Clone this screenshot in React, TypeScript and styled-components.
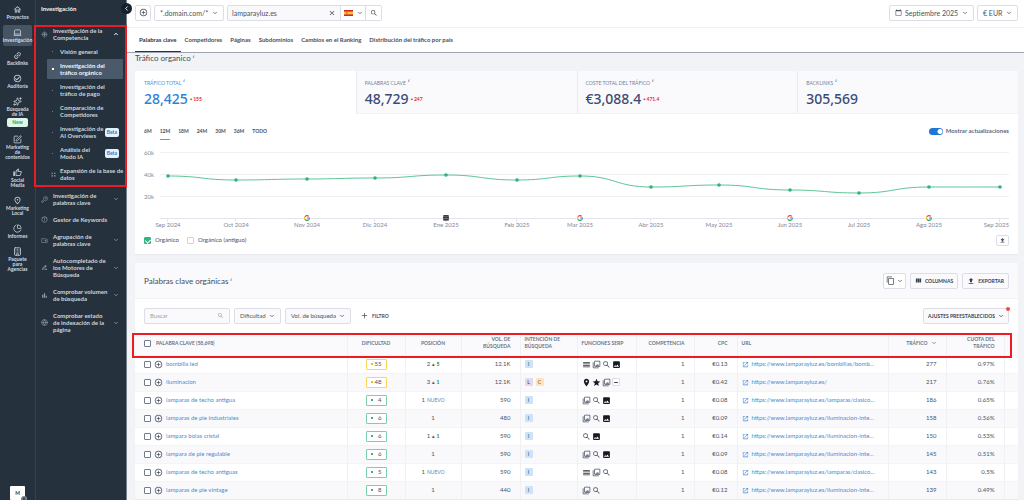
import React from 'react';
import styled, { createGlobalStyle, css } from 'styled-components';
import {
  MdAddCircleOutline, MdCalendarToday, MdCheckCircleOutline, MdContentCopy, MdImage, MdLink, MdOpenInNew,
  MdOutlineHome, MdOutlinePhotoLibrary, MdPlace, MdReorder, MdSearch, MdStar, MdUpload, MdViewColumn,
  MdOutlineThumbUp, MdOutlinePlace, MdOutlineCreateNewFolder, MdErrorOutline, MdBarChart,
  MdOutlineGpsFixed, MdAdd, MdClose, MdDriveFileRenameOutline, MdZoomOutMap,
} from 'react-icons/md';
import { Building, ChartPie, ChevronDown, ChevronLeft, ChevronUp, Globe, KeyRound, Laptop, Sparkles, SquarePen } from 'lucide-react';

const GlobalStyle = createGlobalStyle`
  * { box-sizing: border-box; }
  body {
    margin: 0;
    background: #f2f3f7;
    color: #4a5261;
    font: 6px/8px Lato, "Noto Sans", sans-serif;
  }
  button, input, select { font: inherit; color: inherit; margin: 0; }
  a { color: inherit; text-decoration: none; }
  svg { flex: none; }
`;

const Shell = styled.div`
  display: flex;
  height: 100vh;
  overflow: hidden;
`;

/* ---------- icon rail ---------- */

const Rail = styled.nav`
  display: flex;
  flex-direction: column;
  align-items: center;
  gap: 8px;
  flex: none;
  width: 35px;
  padding-top: 5px;
  background: #25323e;
  color: #d3dae1;
  font-size: 5px;
  line-height: 5px;
  font-weight: 700;
  text-align: center;
`;

const RailLink = styled.a<{ $active?: boolean }>`
  display: flex;
  flex-direction: column;
  align-items: center;
  gap: 1px;
  width: 29px;
  ${p => p.$active && css`
    padding: 3px 0;
    margin: -3px 0;
    border-radius: 2px;
    background: #465564;
  `}
`;

const NewBadge = styled.span`
  width: 21px;
  border-radius: 2px;
  background: #dff7ea;
  color: #2a9d6a;
  line-height: 9px;
`;

const Avatar = styled.div`
  position: relative;
  width: 15px;
  height: 14px;
  margin-top: auto;
  border-radius: 1px;
  background: #fff;
  color: #2b3947;
  line-height: 14px;
  svg { position: absolute; right: -2px; bottom: -2px; background: #9aa4ae; border-radius: 50%; }
`;

/* ---------- section menu ---------- */

const Menu = styled.aside`
  position: relative;
  flex: none;
  width: 92px;
  padding: 5px 3px 0 5px;
  border-left: 1px solid #34424f;
  border-right: 1px solid #76818c;
  background: #25323e;
  color: #cdd4db;
  line-height: 7px;
  font-weight: 700;
`;

const MenuTitle = styled.h2`
  margin: 0 0 14px;
  color: #f2f5f8;
  font-size: 6px;
  line-height: 8px;
`;

const Collapse = styled.button`
  position: absolute;
  top: 3px;
  right: -6px;
  z-index: 2;
  display: grid;
  place-items: center;
  width: 11px;
  height: 11px;
  padding: 0;
  border: 0;
  border-radius: 50%;
  background: #18222c;
  color: #fff;
`;

const Group = styled.a`
  display: flex;
  align-items: center;
  margin-bottom: 10px;
  > span { flex: 1; padding-left: 5px; white-space: pre; }
  > svg { color: #93a0ac; }
  > svg:last-child { margin-right: 4px; }
`;

const SubList = styled.ul`
  display: flex;
  flex-direction: column;
  gap: 1px;
  margin: -6px 0 8px 6px;
  padding: 0;
  list-style: none;
`;

const SubLink = styled.a<{ $active?: boolean }>`
  display: flex;
  align-items: center;
  padding: 3px 4px;
  border-radius: 1px;
  background: ${p => (p.$active ? '#4b5a6a' : 'transparent')};
  color: ${p => (p.$active ? '#f2f5f8' : 'inherit')};
  &::before {
    content: '';
    width: ${p => (p.$active ? '2px' : '1px')};
    height: ${p => (p.$active ? '2px' : '1px')};
    margin-left: 1px;
    margin-right: ${p => (p.$active ? '6px' : '7px')};
    background: ${p => (p.$active ? '#fff' : '#6d7a86')};
  }
  span { flex: 1; white-space: pre-line; }
`;

const ExpandLink = styled(SubLink)`
  gap: 4px;
  padding-right: 0;
  &::before { display: none; }
  span { white-space: pre; }
`;

const Beta = styled.em`
  padding: 0 2px;
  border-radius: 2px;
  background: #e4f0fb;
  color: #2e7bc4;
  font-size: 5px;
  line-height: 9px;
  font-style: normal;
`;

/* ---------- main area ---------- */

const Main = styled.main`
  flex: 1;
  min-width: 0;
`;

const TopBar = styled.header`
  display: flex;
  align-items: center;
  gap: 3px;
  height: 28px;
  padding: 0 6px 2px 8px;
  background: #fff;
  border-bottom: 1px solid #f1f2f5;
  font-size: 7px;
`;

const Spacer = styled.span`
  flex: 1;
`;

const box = css`
  border: 1px solid #dcdde6;
  border-radius: 2px;
  background: #fff;
`;

const IconButton = styled.button<{ $w?: number }>`
  ${box}
  display: flex;
  align-items: center;
  justify-content: center;
  gap: 2px;
  width: ${p => p.$w ?? 16}px;
  height: 16px;
  padding: 0;
`;

const SelectBox = styled.label<{ $tint?: boolean }>`
  ${box}
  display: inline-flex;
  align-items: center;
  gap: 3px;
  height: 16px;
  padding: 0 5px;
  ${p => p.$tint && css`background: #fafafc;`}
  select {
    appearance: none;
    border: 0;
    padding: 0;
    background: transparent;
    outline: 0;
  }
`;

const SearchGroup = styled.form`
  ${box}
  display: flex;
  align-items: center;
  width: 155px;
  height: 16px;
  background: #f9f9fc;
  input {
    flex: 1;
    min-width: 0;
    padding: 0 4px;
    border: 0;
    background: transparent;
    outline: 0;
  }
  button {
    display: flex;
    align-items: center;
    justify-content: center;
    height: 14px;
    padding: 0;
    border: 0;
    background: transparent;
  }
  button + button { border-left: 1px solid #dcdde6; background: #fff; }
`;

const ClearButton = styled.button`
  width: 16px;
`;
const FlagButton = styled.button`
  gap: 4px;
  width: 25px;
`;
const GoButton = styled.button`
  width: 16px;
`;

const Tabs = styled.nav`
  display: flex;
  gap: 8px;
  height: 25px;
  padding: 0 8px;
  background: #fff;
  border-bottom: 1px solid #9fa6b3;
`;

const Tab = styled.a<{ $active?: boolean }>`
  padding-top: 8px;
  font-weight: 700;
  color: #4a505c;
  ${p => p.$active && css`
    padding-left: 4px;
    padding-right: 4px;
    margin-right: -4px;
    border-bottom: 1px solid #2d3140;
    color: #31363f;
  `}
`;

const Content = styled.div`
  padding: 0 6px 0 8px;
`;

const Heading = styled.h1`
  margin: 0;
  height: 18px;
  color: #454b57;
  font-size: 8px;
  line-height: 10px;
  font-weight: 400;
`;

const Info = styled.sup`
  margin-left: 2px;
  color: #4f8197;
  font: italic 700 5px/5px "Liberation Serif", serif;
  vertical-align: 3px;
`;

const Card = styled.section`
  margin-bottom: 9px;
  background: #fff;
  box-shadow: 0 1px 1px #e8e9ef;
`;

const Stats = styled.div`
  display: grid;
  grid-template-columns: repeat(4, 1fr);
`;

const Stat = styled.div<{ $active?: boolean }>`
  height: 43px;
  padding: 7px 9px;
  font-family: "Noto Sans", sans-serif;
  color: ${p => (p.$active ? '#2f80d8' : '#3c4a75')};
  background: ${p => (p.$active ? '#fff' : '#fafafc')};
  border-bottom: 1px solid ${p => (p.$active ? '#fff' : '#f1f1f6')};
  box-shadow: ${p => (p.$active ? 'none' : 'inset 1px 0 #e9e9f1')};
`;

const StatLabel = styled.div<{ $active?: boolean }>`
  color: ${p => (p.$active ? '#4a90d9' : '#74819a')};
  font: 5px/8px Lato, sans-serif;
`;

const StatValue = styled.div`
  display: flex;
  align-items: center;
  gap: 2px;
  margin-top: 3px;
  font-size: 14px;
  line-height: 18px;
  font-weight: 500;
`;

const Delta = styled.span`
  color: #e2303f;
  font: 700 5px/6px Lato, sans-serif;
`;

const ChartHead = styled.div`
  display: flex;
  align-items: center;
  height: 34px;
  padding: 0 9px;
`;

const Range = styled.button<{ $active?: boolean }>`
  height: 17px;
  margin-right: 8px;
  padding: 0;
  border: 0;
  border-bottom: 1px solid ${p => (p.$active ? '#5ba0e6' : 'transparent')};
  background: transparent;
  font-size: 5px;
  font-weight: 700;
`;

const Toggle = styled.label`
  display: flex;
  align-items: center;
  gap: 3px;
  color: #5c6880;
  font-weight: 700;
  input {
    appearance: none;
    width: 14px;
    height: 7px;
    margin: 0;
    border-radius: 4px;
    background: radial-gradient(circle at 11px 50%, #fff 2px, #1f77d4 3px);
  }
`;

const Chart = styled.svg`
  display: block;
  width: 100%;
  text { font-size: 6px; fill: #80889a; }
`;

const Legend = styled.div`
  display: flex;
  align-items: center;
  gap: 8px;
  height: 23px;
  padding: 0 9px 5px;
  font-size: 6px;
  label { display: flex; align-items: center; gap: 4px; }
`;

const Tick = styled.input`
  appearance: none;
  display: block;
  flex: none;
  width: 7px;
  height: 7px;
  border: 1px solid #737b8e;
  border-radius: 1px;
  background: #fff;
  &[data-tone='light'] { border-color: #cfd3dc; }
  &:checked {
    border-color: #36b37e;
    background: #36b37e;
    position: relative;
  }
  &:checked::after {
    content: '';
    position: absolute;
    left: 1px;
    top: 0;
    width: 3px;
    height: 4px;
    border: solid #fff;
    border-width: 0 1px 1px 0;
    transform: rotate(45deg);
  }
`;

const SmallExport = styled(IconButton)`
  width: 13px;
  height: 11px;
`;

const TableTitle = styled.div`
  display: flex;
  align-items: center;
  gap: 4px;
  height: 36px;
  padding: 0 9px;
  background: #fafafc;
  border-bottom: 1px solid #f1f1f6;
  h2 { margin: 0; font-size: 8px; font-weight: 400; color: #454b57; }
`;

const TextButton = styled(IconButton)`
  width: auto;
  padding: 0 4px;
  gap: 3px;
  background: #fafafc;
  color: #3b404d;
  font-size: 5px;
  font-weight: 700;
`;

const Filters = styled.div`
  display: flex;
  align-items: center;
  gap: 4px;
  height: 33px;
  padding: 0 9px;
`;

const FilterSearch = styled(SelectBox)`
  width: 86px;
  input { flex: 1; min-width: 0; padding: 0; border: 0; outline: 0; background: transparent; }
  input::placeholder { color: #9a9faa; opacity: 1; }
`;

const AddFilter = styled.button`
  display: flex;
  align-items: center;
  gap: 3px;
  margin-left: 5px;
  padding: 0;
  border: 0;
  background: transparent;
  font-size: 5px;
  font-weight: 700;
`;

const Presets = styled.div`
  position: relative;
  display: flex;
  &::after {
    content: '';
    position: absolute;
    top: -1px;
    right: -1px;
    width: 4px;
    height: 4px;
    border-radius: 50%;
    background: #ef4a45;
  }
`;

const TableWrap = styled.div`
  position: relative;
`;

const Table = styled.table`
  width: 100%;
  table-layout: fixed;
  border-collapse: collapse;
  font-size: 6px;
  th, td { padding: 0 9px 0 4px; font-weight: 400; text-align: left; }
  th:first-child, td:first-child { padding-left: 9px; }
  th + th, td + td { border-left: 1px solid #f0f0f5; }
  th {
    height: 23px;
    background: #fafafc;
    color: #6a7588;
    font-size: 5px;
    line-height: 7px;
    font-weight: 700;
  }
  td { height: 18px; border-top: 1px solid #f4f4f8; white-space: nowrap; }
  tbody tr:nth-child(even) { background: #f9f9fc; }
`;

const Num = styled.td`
  && { text-align: right; }
`;
const NumHead = styled.th`
  && { text-align: right; }
`;
const Mid = styled.td`
  && { text-align: center; padding: 0; }
`;
const MidHead = styled.th`
  && { text-align: center; padding: 0; }
`;
const SerpHead = styled.th`
  white-space: nowrap;
`;

const Row = styled.div<{ $gap?: number; $end?: boolean }>`
  display: flex;
  align-items: center;
  justify-content: ${p => (p.$end ? 'flex-end' : 'flex-start')};
  gap: ${p => p.$gap ?? 3}px;
`;

const Link = styled.a`
  color: #4a8cd3;
`;

const Pill = styled.span<{ $hard: boolean }>`
  display: inline-flex;
  align-items: center;
  justify-content: space-between;
  width: 21px;
  height: 11px;
  padding: 0 4px;
  border: 1px solid ${p => (p.$hard ? '#fbd65c' : '#7ccfab')};
  border-radius: 1px;
  background: #fff;
  vertical-align: middle;
  &::before {
    content: '';
    width: 2px;
    height: 2px;
    background: ${p => (p.$hard ? '#fbbc05' : '#36b37e')};
  }
`;

const Change = styled.small<{ $fresh?: boolean }>`
  margin-left: 2px;
  color: ${p => (p.$fresh ? '#6a7fb8' : '#1f7a63')};
  font-size: 5px;
  font-weight: ${p => (p.$fresh ? 400 : 700)};
`;

const intents: Record<string, [string, string]> = {
  I: ['#cfe3f7', '#4478a8'],
  L: ['#e3d9ea', '#775a8c'],
  C: ['#fde3bf', '#b27a35'],
};

const Intent = styled.span<{ $kind: string }>`
  width: 8px;
  border-radius: 1px;
  background: ${p => intents[p.$kind][0]};
  color: ${p => intents[p.$kind][1]};
  font-size: 5px;
  font-weight: 700;
  text-align: center;
`;

const More = styled.button`
  display: grid;
  place-items: center;
  width: 8px;
  height: 8px;
  padding: 0;
  border: 1px solid #dcdde6;
  border-radius: 1px;
  background: #fff;
  &::before { content: ''; width: 4px; height: 1px; background: #4a5261; }
`;

/* red annotation frames laid over the page */
const Frame = styled.div`
  position: absolute;
  z-index: 1;
  border: 2px solid #ec1c24;
  pointer-events: none;
`;
const MenuFrame = styled(Frame)`
  inset: -2px -4px -3px -7px;
`;
const HeadFrame = styled(Frame)`
  top: 1px;
  left: -3px;
  right: 6px;
  height: 25px;
`;
const Framed = styled.div`
  position: relative;
`;

/* ---------- data ---------- */

const rail: { icon: React.ReactNode; lines: string[]; active?: boolean; badge?: string }[] = [
  { icon: <MdOutlineHome size={9} />, lines: ['Proyectos'] },
  { icon: <Laptop size={9} />, lines: ['Investigación'], active: true },
  { icon: <MdLink size={9} transform="rotate(-45)" />, lines: ['Backlinks'] },
  { icon: <MdCheckCircleOutline size={9} />, lines: ['Auditoría'] },
  { icon: <Sparkles size={9} />, lines: ['Búsqueda', 'de IA'], badge: 'New' },
  { icon: <SquarePen size={9} />, lines: ['Marketing', 'de', 'contenidos'] },
  { icon: <MdOutlineThumbUp size={9} />, lines: ['Social', 'Media'] },
  { icon: <MdOutlinePlace size={9} />, lines: ['Marketing', 'Local'] },
  { icon: <ChartPie size={9} />, lines: ['Informes'] },
  { icon: <Building size={9} />, lines: ['Paquete', 'para', 'Agencias'] },
];

const sub: { text: string; active?: boolean; beta?: boolean }[] = [
  { text: 'Visión general' },
  { text: 'Investigación del\ntráfico orgánico', active: true },
  { text: 'Investigación del\ntráfico de pago' },
  { text: 'Comparación de\nCompetidores' },
  { text: 'Investigación de\nAI Overviews', beta: true },
  { text: 'Análisis del\nModo IA', beta: true },
];

const groups = [
  { icon: <KeyRound size={7} />, text: 'Investigación de\npalabras clave', open: true },
  { icon: <MdErrorOutline size={7} />, text: 'Gestor de Keywords', open: false },
  { icon: <MdOutlineCreateNewFolder size={7} />, text: 'Agrupación de\npalabras clave', open: true },
  { icon: <MdDriveFileRenameOutline size={7} />, text: 'Autocompletado de\nlos Motores de\nBúsqueda', open: true },
  { icon: <MdBarChart size={7} />, text: 'Comprobar volumen\nde búsqueda', open: true },
  { icon: <Globe size={7} />, text: 'Comprobar estado\nde indexación de la\npágina', open: true },
];

const stats = [
  ['TRÁFICO TOTAL', '28,425', '155'],
  ['PALABRAS CLAVE', '48,729', '247'],
  ['COSTE TOTAL DEL TRÁFICO', '€3,088.4', '471.4'],
  ['BACKLINKS', '305,569', ''],
];

const points: [string, number, number][] = [
  ['Sep 2024', 33, 28], ['Oct 2024', 101, 32], ['Nov 2024', 172, 31], ['Dic 2024', 240, 30], ['Ene 2025', 311, 27],
  ['Feb 2025', 382, 32], ['Mar 2025', 445, 28], ['Abr 2025', 516, 39], ['May 2025', 584, 37], ['Jun 2025', 655, 42],
  ['Jul 2025', 724, 45], ['Ago 2025', 794, 39], ['Sep 2025', 865, 39],
];
const googleUpdates = [2, 6, 9, 11];

/* cubic curve with horizontal handles between neighbouring months */
const line = points.reduce((d, [, x, y], i) => {
  if (i === 0) return `M${x} ${y}`;
  const [, px, py] = points[i - 1];
  const m = (px + x) / 2;
  return `${d}C${m} ${py} ${m} ${y} ${x} ${y}`;
}, '');

const serpIcons: Record<string, React.ReactNode> = {
  r: <MdReorder size={9} color="#2c303a" />,
  p: <MdOutlinePhotoLibrary size={9} />,
  s: <MdSearch size={9} />,
  i: <MdImage size={9} color="#161a24" />,
  m: <MdPlace size={9} color="#161a24" />,
  t: <MdStar size={9} color="#161a24" />,
  o: <More aria-label="Más" />,
};

const rows: [string, number, string, string, string, string, string, string, string, string, string][] = [
  ['bombilla led', 55, '2', '5', '12.1K', 'I', 'rpsi', '€0.13', 'bombillas/bomb...', '277', '0.97%'],
  ['iluminacion', 48, '3', '1', '12.1K', 'LC', 'mtpo', '€0.42', '', '217', '0.76%'],
  ['lamparas de techo antigua', 4, '1', 'NUEVO', '590', 'I', 'psi', '€0.08', 'lamparas/clasico...', '186', '0.65%'],
  ['lamparas de pie industriales', 6, '1', '', '480', 'I', 'psi', '€0.09', 'iluminacion-inte...', '158', '0.56%'],
  ['lampara bolas cristal', 6, '1', '1', '590', 'I', 'si', '€0.14', 'iluminacion-inte...', '150', '0.53%'],
  ['lampara de pie regulable', 6, '1', '', '590', 'I', 'psi', '€0.09', 'iluminacion-inte...', '145', '0.51%'],
  ['lamparas de techo antiguas', 5, '1', 'NUEVO', '590', 'I', 'rps', '€0.08', 'lamparas/clasico...', '143', '0.5%'],
  ['lamparas de pie vintage', 8, '1', '', '440', 'I', 'ps', '€0.12', 'iluminacion-inte...', '139', '0.49%'],
];

const columns = [undefined, 58, 56, 59, 57, 59, 58, 43, 151, 58, 58, 14];

/* ---------- pieces ---------- */

const Chevron = () => <ChevronDown size={6} strokeWidth={3} />;

const Picker = ({ label, value, icon, tint }: { label: string; value: string; icon?: React.ReactNode; tint?: boolean }) => (
  <SelectBox $tint={tint}>
    {icon}
    <select aria-label={label}><option>{value}</option></select>
    <Chevron />
  </SelectBox>
);

const SpainFlag = () => (
  <svg width="9" height="6" viewBox="0 0 9 6">
    <path fill="#d8232a" d="M0 0h9v6H0z" />
    <path fill="#fbc531" d="M0 1.6h9v2.8H0z" />
    <path fill="#b5622b" d="M2 2.2h1.4v1.6H2z" />
  </svg>
);

const GoogleMark = ({ x, y }: { x: number; y: number }) => (
  <g transform={`translate(${x - 3} ${y - 3})`} fill="none" strokeWidth="1.2">
    <circle cx="3" cy="3" r="3.4" fill="#fff" />
    <path stroke="#ea4335" d="M.9 1.8A2.4 2.4 0 0 1 4.8 1.4" />
    <path stroke="#fbbc05" d="M.9 4.2A2.4 2.4 0 0 1 .9 1.8" />
    <path stroke="#34a853" d="M4.6 4.8A2.4 2.4 0 0 1 .9 4.2" />
    <path stroke="#4285f4" d="M3 3h2.4A2.4 2.4 0 0 1 4.6 4.8" />
  </g>
);

const TrafficChart = () => (
  <Chart viewBox="0 0 883 83" role="img" aria-label="Tráfico orgánico por mes">
    {['60k', '40k', '20k'].map((t, i) => (
      <g key={t}>
        <path d={`M25 ${4.5 + i * 22}H874`} stroke="#eff0f3" />
        <text x="9" y={7 + i * 22}>{t}</text>
      </g>
    ))}
    <path d="M25 70.5H874" stroke="#e2e4ee" />
    {points.map(([t, x]) => (
      <g key={t}>
        <path d={`M${x - 0.5} 71v3`} stroke="#e2e4ee" />
        <text x={x === 865 ? 874 : x} y="79" textAnchor={x === 865 ? 'end' : 'middle'}>{t}</text>
      </g>
    ))}
    <path d={line} fill="none" stroke="#5cc596" />
    {points.map(([t, x, y]) => <circle key={t} cx={x} cy={y} r="1.8" fill="#2fb27b" />)}
    {googleUpdates.map(i => <GoogleMark key={i} x={points[i][1]} y={70} />)}
    <g transform="translate(308 67)" fill="#3a3d44">
      <rect width="6" height="6" rx="1.5" fill="#777b82" />
      <path d="M.5 0h5v1.4h-5zM0 2h6v1.2H0zM.5 4h5v1h-5z" />
    </g>
  </Chart>
);

export default function App() {
  return (
    <Shell>
      <GlobalStyle />
      <Rail aria-label="Principal">
        {rail.map(r => (
          <RailLink key={r.lines.join()} href="#" $active={r.active}>
            {r.icon}
            <span>{r.lines.map(l => <div key={l}>{l}</div>)}</span>
            {r.badge && <NewBadge>{r.badge}</NewBadge>}
          </RailLink>
        ))}
        <Avatar>M<MdOutlineGpsFixed size={6} /></Avatar>
      </Rail>

      <Menu>
        <MenuTitle>Investigación</MenuTitle>
        <Collapse aria-label="Contraer menú"><ChevronLeft size={7} strokeWidth={3} /></Collapse>
        <Framed>
          <Group href="#">
            <MdOutlineGpsFixed size={7} />
            <span>{'Investigación de la\nCompetencia'}</span>
            <ChevronUp size={6} strokeWidth={4} color="#fff" />
          </Group>
          <SubList>
            {sub.map(s => (
              <li key={s.text}>
                <SubLink href="#" $active={s.active}>
                  <span>{s.text}</span>
                  {s.beta && <Beta>Beta</Beta>}
                </SubLink>
              </li>
            ))}
            <li>
              <ExpandLink href="#">
                <MdZoomOutMap size={5} />
                <span>{'Expansión de la base de\ndatos'}</span>
              </ExpandLink>
            </li>
          </SubList>
          <MenuFrame />
        </Framed>
        {groups.map(g => (
          <Group key={g.text} href="#">
            {g.icon}
            <span>{g.text}</span>
            {g.open && <ChevronDown size={6} strokeWidth={3} />}
          </Group>
        ))}
      </Menu>

      <Main>
        <TopBar>
          <IconButton aria-label="Añadir"><MdAddCircleOutline size={9} /></IconButton>
          <Picker label="Ámbito" value="*.domain.com/*" />
          <SearchGroup>
            <input aria-label="Dominio" defaultValue="lamparayluz.es" />
            <ClearButton type="button" aria-label="Borrar"><MdClose size={8} /></ClearButton>
            <FlagButton type="button" aria-label="España"><SpainFlag /><Chevron /></FlagButton>
            <GoButton aria-label="Buscar"><MdSearch size={8} /></GoButton>
          </SearchGroup>
          <Spacer />
          <Picker label="Fecha" value="Septiembre 2025" icon={<MdCalendarToday size={7} />} />
          <Picker label="Moneda" value="€ EUR" />
        </TopBar>
        <Tabs>
          {['Palabras clave', 'Competidores', 'Páginas', 'Subdominios', 'Cambios en el Ranking', 'Distribución del tráfico por país'].map((t, i) => (
            <Tab key={t} href="#" $active={i === 0}>{t}</Tab>
          ))}
        </Tabs>

        <Content>
          <Heading>Tráfico organico<Info>i</Info></Heading>
          <Card>
            <Stats>
              {stats.map(([label, value, delta], i) => (
                <Stat key={label} $active={i === 0}>
                  <StatLabel $active={i === 0}>{label}<Info>i</Info></StatLabel>
                  <StatValue>{value}{delta && <Delta>▪ {delta}</Delta>}</StatValue>
                </Stat>
              ))}
            </Stats>
            <ChartHead>
              {['6M', '12M', '18M', '24M', '30M', '36M', 'TODO'].map(t => <Range key={t} $active={t === '12M'}>{t}</Range>)}
              <Spacer />
              <Toggle><input type="checkbox" role="switch" defaultChecked />Mostrar actualizaciones</Toggle>
            </ChartHead>
            <TrafficChart />
            <Legend>
              <label><Tick type="checkbox" defaultChecked />Orgánico</label>
              <label><Tick type="checkbox" data-tone="light" />Orgánico (antiguo)</label>
              <Spacer />
              <SmallExport aria-label="Exportar gráfico"><MdUpload size={7} /></SmallExport>
            </Legend>
          </Card>

          <Card>
            <TableTitle>
              <h2>Palabras clave orgánicas<Info>i</Info></h2>
              <Spacer />
              <IconButton $w={23} aria-label="Copiar"><MdContentCopy size={9} /><Chevron /></IconButton>
              <TextButton><MdViewColumn size={7} />COLUMNAS</TextButton>
              <TextButton><MdUpload size={8} />EXPORTAR</TextButton>
            </TableTitle>
            <Filters>
              <FilterSearch $tint>
                <input aria-label="Buscar palabra clave" placeholder="Buscar" />
                <MdSearch size={7} color="#9a9faa" />
              </FilterSearch>
              <Picker label="Dificultad" value="Dificultad" tint />
              <Picker label="Volumen de búsqueda" value="Vol. de búsqueda" tint />
              <AddFilter><MdAdd size={9} />FILTRO</AddFilter>
              <Spacer />
              <Presets><TextButton>AJUSTES PREESTABLECIDOS<Chevron /></TextButton></Presets>
            </Filters>
            <TableWrap>
              <Table>
                <colgroup>{columns.map((w, i) => <col key={i} width={w} />)}</colgroup>
                <thead>
                  <tr>
                    <th><Row $gap={5}><Tick type="checkbox" aria-label="Seleccionar todo" />PALABRA CLAVE (58,698)</Row></th>
                    <MidHead>DIFICULTAD</MidHead>
                    <MidHead>POSICIÓN</MidHead>
                    <NumHead>VOL. DE BÚSQUEDA</NumHead>
                    <th>INTENCIÓN DE BÚSQUEDA</th>
                    <SerpHead>FUNCIONES SERP</SerpHead>
                    <NumHead>COMPETENCIA</NumHead>
                    <NumHead>CPC</NumHead>
                    <th>URL</th>
                    <NumHead><Row $end>TRÁFICO<Chevron /></Row></NumHead>
                    <NumHead>CUOTA DEL TRÁFICO</NumHead>
                    <th />
                  </tr>
                </thead>
                <tbody>
                  {rows.map(([kw, diff, pos, change, vol, kinds, serp, cpc, path, traffic, share]) => (
                    <tr key={kw}>
                      <td>
                        <Row>
                          <Tick type="checkbox" aria-label={kw} />
                          <MdAddCircleOutline size={9} />
                          <Link href="#">{kw}</Link>
                        </Row>
                      </td>
                      <Mid><Pill $hard={diff > 20}>{diff}</Pill></Mid>
                      <Mid>
                        {pos}
                        {change && <Change $fresh={change === 'NUEVO'}>{change === 'NUEVO' ? change : `▴ ${change}`}</Change>}
                      </Mid>
                      <Num>{vol}</Num>
                      <td><Row>{kinds.split('').map(k => <Intent key={k} $kind={k}>{k}</Intent>)}</Row></td>
                      <td><Row $gap={1}>{serp.split('').map(s => <React.Fragment key={s}>{serpIcons[s]}</React.Fragment>)}</Row></td>
                      <Num>1</Num>
                      <Num>{cpc}</Num>
                      <td>
                        <Row>
                          <MdOpenInNew size={7} color="#4a8cd3" />
                          <Link href="#">https://www.lamparayluz.es/{path}</Link>
                        </Row>
                      </td>
                      <Num>{traffic}</Num>
                      <Num>{share}</Num>
                      <td />
                    </tr>
                  ))}
                </tbody>
              </Table>
              <HeadFrame />
            </TableWrap>
          </Card>
        </Content>
      </Main>
    </Shell>
  );
}
